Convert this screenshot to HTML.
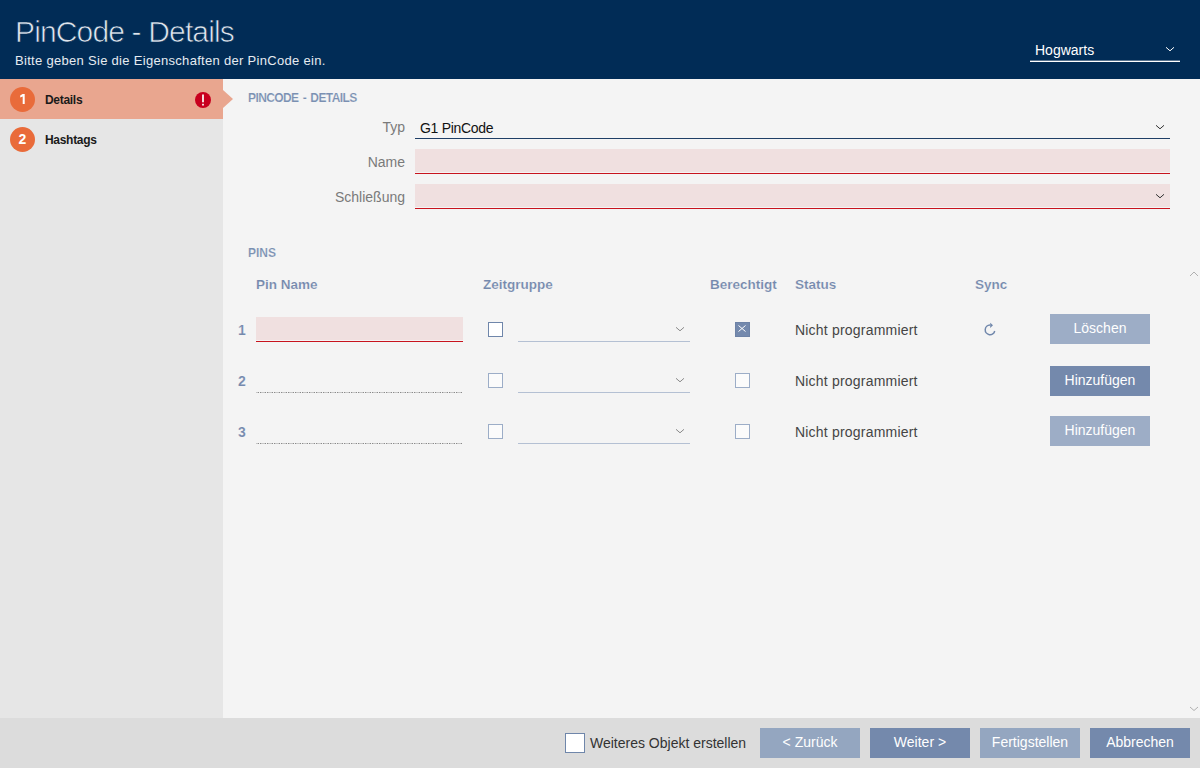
<!DOCTYPE html>
<html><head><meta charset="utf-8">
<style>
*{margin:0;padding:0;box-sizing:border-box}
html,body{width:1200px;height:768px;overflow:hidden;background:#f4f4f4;font-family:"Liberation Sans",sans-serif}
.a{position:absolute;white-space:nowrap}
#hdr{left:0;top:0;width:1200px;height:79px;background:#012c56}
#title{left:15px;top:14px;font-size:30px;letter-spacing:-0.85px;color:#dfe6ee;line-height:36px;-webkit-text-stroke:0.7px #012c56}
#sub{left:15px;top:53px;font-size:13px;letter-spacing:0.3px;color:#e6ebf1;line-height:16px}
#hog{left:1035px;top:42px;font-size:14px;color:#fff;line-height:17px}
#hogline{left:1030px;top:61px;width:150px;height:1px;background:#fff;box-shadow:0 -1px 0 rgba(255,255,255,0.35)}
#side{left:0;top:79px;width:223px;height:639px;background:#e6e6e6}
#act{left:0;top:79px;width:223px;height:40px;background:#e9a68f}
#arrow{left:223px;top:89.7px;width:0;height:0;border-top:9.6px solid transparent;border-bottom:9.6px solid transparent;border-left:10px solid #e9a68f}
.circ{width:25px;height:25px;border-radius:50%;background:#e96b3a;color:#fff;font-size:14px;font-weight:bold;text-align:center;line-height:25px}
.stxt{font-size:12px;font-weight:bold;letter-spacing:-0.3px;color:#1a1a1a;line-height:14px}
#excl{left:195px;top:91.5px;width:16px;height:16px;border-radius:50%;background:#c8001e}
#foot{left:0;top:718px;width:1200px;height:50px;background:#dcdcdc}
.sec{font-size:12px;font-weight:bold;color:#7a90b2;line-height:14px;-webkit-text-stroke:0.15px #f4f4f4}
.lbl{font-size:14px;color:#7a7a7a;line-height:16px;text-align:right}
.val{font-size:14px;letter-spacing:-0.3px;color:#111;line-height:16px}
.pink{background:#f0e0e0}
.red{background:#c8141e;height:1px}
.th{font-size:13.5px;font-weight:bold;color:#7489ad;line-height:16px;-webkit-text-stroke:0.15px #f4f4f4}
.num{font-size:14px;font-weight:bold;color:#7489ad;line-height:16px;-webkit-text-stroke:0.15px #f4f4f4}
.cb{width:15px;height:15px;border:1px solid #6f86aa;background:#fff}
.cb2{width:15px;height:15px;border:1px solid #9cadc7;background:#fbfbfb}
.cbx{width:15px;height:15px;background:#7489ad;box-shadow:inset 0 0 0 1px #6d82a6}
.dd{height:1px;background:#b4c0d3}
.dots{height:1px;background:linear-gradient(90deg,#8a8a8a 0 1px,#c6c6c6 1px 5px,#8a8a8a 5px 6px,transparent 6px 7px) 4px 0/7px 1px repeat-x}
.st{font-size:14px;letter-spacing:0.2px;color:#454545;line-height:16px}
.btn{width:100px;height:30px;background:#9dadc6;color:#fff;font-size:14px;text-align:center;line-height:28px}
.btnd{background:#7489ac}
.fbtn{height:30px;background:#94a6c0;color:#fff;font-size:14px;text-align:center;line-height:29px;width:100px}
.fbtn.btnd{background:#7489ac}
</style></head><body>
<div class="a" id="hdr"></div>
<div class="a" id="title">PinCode - Details</div>
<div class="a" id="sub">Bitte geben Sie die Eigenschaften der PinCode ein.</div>
<div class="a" id="hog">Hogwarts</div>
<div class="a" id="hogline"></div>
<svg class="a" style="left:1165px;top:46px" width="10" height="6" viewBox="0 0 10 6"><path d="M1 1.3 L5 4.8 L9 1.3" fill="none" stroke="#fff" stroke-width="1"/></svg>
<div class="a" id="side"></div>
<div class="a" id="act"></div>
<div class="a" id="arrow"></div>
<div class="a circ" style="left:10px;top:87px"><svg width="25" height="25" viewBox="0 0 25 25" style="display:block"><path d="M12.6 6.9 L14.7 6.9 L14.7 17 L12.7 17 L12.7 9.4 L10.2 10.6 L10.2 8.6 Z" fill="#fff"/></svg></div>
<div class="a stxt" style="left:45px;top:93px">Details</div>
<div class="a" id="excl"><svg width="16" height="16" viewBox="0 0 16 16" style="display:block"><rect x="7" y="2.5" width="2" height="7.8" fill="#f6dede"/><rect x="7" y="11.8" width="2" height="1.7" fill="#f6dede"/></svg></div>
<div class="a circ" style="left:10px;top:127px">2</div>
<div class="a stxt" style="left:45px;top:133px">Hashtags</div>

<div class="a sec" style="left:248px;top:91px;letter-spacing:-0.6px;word-spacing:1.5px">PINCODE - DETAILS</div>
<div class="a lbl" style="left:300px;width:105px;top:119px">Typ</div>
<div class="a val" style="left:420px;top:120px">G1 PinCode</div>
<div class="a" style="left:415px;top:138px;width:755px;height:1px;background:#1f3e66"></div>
<svg class="a" style="left:1155px;top:124px" width="10" height="6" viewBox="0 0 10 6"><path d="M1 1.3 L5 4.8 L9 1.3" fill="none" stroke="#333" stroke-width="1"/></svg>
<div class="a lbl" style="left:300px;width:105px;top:154px">Name</div>
<div class="a pink" style="left:415px;top:149px;width:755px;height:23px"></div>
<div class="a red" style="left:415px;top:173px;width:755px"></div>
<div class="a lbl" style="left:300px;width:105px;top:189px">Schließung</div>
<div class="a pink" style="left:415px;top:184px;width:755px;height:23px"></div>
<div class="a red" style="left:415px;top:208px;width:755px"></div>
<svg class="a" style="left:1155px;top:193px" width="10" height="6" viewBox="0 0 10 6"><path d="M1 1.3 L5 4.8 L9 1.3" fill="none" stroke="#333" stroke-width="1"/></svg>

<div class="a sec" style="left:248px;top:246px">PINS</div>
<div class="a th" style="left:256px;top:277px">Pin Name</div>
<div class="a th" style="left:483px;top:277px">Zeitgruppe</div>
<div class="a th" style="left:710px;top:277px">Berechtigt</div>
<div class="a th" style="left:795px;top:277px">Status</div>
<div class="a th" style="left:975px;top:277px">Sync</div>
<div class="a num" style="left:238px;top:322px">1</div>
<div class="a" style="left:256px;top:317px;width:207px;height:23px;background:#f0e0e0"></div>
<div class="a" style="left:256px;top:341px;width:207px;height:1px;background:#c8141e"></div>
<div class="a cb" style="left:488px;top:322px"></div>
<div class="a cbx" style="left:735px;top:322px"><svg width="15" height="15" viewBox="0 0 15 15" style="display:block"><path d="M3.5 3.5 L10.5 9.5 M10.5 3.5 L3.5 9.5" stroke="#fff" stroke-width="1"/></svg></div>
<svg class="a" style="left:982px;top:321px" width="16" height="16" viewBox="0 0 16 16"><path d="M8 4.1 A4.8 4.8 0 1 0 12.7 10" fill="none" stroke="#7087ab" stroke-width="1.5"/><path d="M8.2 1.8 L11 4.3 L8.2 6.9 Z" fill="#7087ab"/></svg>
<div class="a btn" style="left:1050px;top:314px">Löschen</div>
<div class="a dd" style="left:518px;top:341px;width:172px"></div>
<svg class="a" style="left:675px;top:326px" width="10" height="6" viewBox="0 0 10 6"><path d="M1 1.3 L5 4.8 L9 1.3" fill="none" stroke="#8a8a8a" stroke-width="1"/></svg><div class="a st" style="left:795px;top:322px">Nicht programmiert</div>
<div class="a num" style="left:238px;top:373px">2</div>
<div class="a dots" style="left:256px;top:392px;width:206px"></div>
<div class="a cb2" style="left:488px;top:373px"></div>
<div class="a cb2" style="left:735px;top:373px"></div>
<div class="a btn btnd" style="left:1050px;top:366px">Hinzufügen</div>
<div class="a dd" style="left:518px;top:392px;width:172px"></div>
<svg class="a" style="left:675px;top:377px" width="10" height="6" viewBox="0 0 10 6"><path d="M1 1.3 L5 4.8 L9 1.3" fill="none" stroke="#8a8a8a" stroke-width="1"/></svg><div class="a st" style="left:795px;top:373px">Nicht programmiert</div>
<div class="a num" style="left:238px;top:424px">3</div>
<div class="a dots" style="left:256px;top:443px;width:206px"></div>
<div class="a cb2" style="left:488px;top:424px"></div>
<div class="a cb2" style="left:735px;top:424px"></div>
<div class="a btn" style="left:1050px;top:416px">Hinzufügen</div>
<div class="a dd" style="left:518px;top:443px;width:172px"></div>
<svg class="a" style="left:675px;top:428px" width="10" height="6" viewBox="0 0 10 6"><path d="M1 1.3 L5 4.8 L9 1.3" fill="none" stroke="#8a8a8a" stroke-width="1"/></svg><div class="a st" style="left:795px;top:424px">Nicht programmiert</div>

<div id="foot" class="a"></div>
<div class="a" style="left:565px;top:733px;width:20px;height:20px;background:#fff;border:1px solid #6f86aa"></div>
<div class="a" style="left:590px;top:735px;font-size:14px;color:#333;line-height:16px">Weiteres Objekt erstellen</div>
<div class="a fbtn" style="left:760px;top:728px">&lt; Zurück</div>
<div class="a fbtn btnd" style="left:870px;top:728px">Weiter &gt;</div>
<div class="a fbtn" style="left:980px;top:728px">Fertigstellen</div>
<div class="a fbtn btnd" style="left:1090px;top:728px">Abbrechen</div>
<svg class="a" style="left:1189px;top:271px" width="10" height="6" viewBox="0 0 10 6"><path d="M1 5 L5 1 L9 5" fill="none" stroke="#b0b0b0" stroke-width="1"/></svg>
<svg class="a" style="left:1189px;top:705.5px" width="10" height="6" viewBox="0 0 10 6"><path d="M1 1 L5 4.5 L9 1" fill="none" stroke="#b0b0b0" stroke-width="1"/></svg>
</body></html>
